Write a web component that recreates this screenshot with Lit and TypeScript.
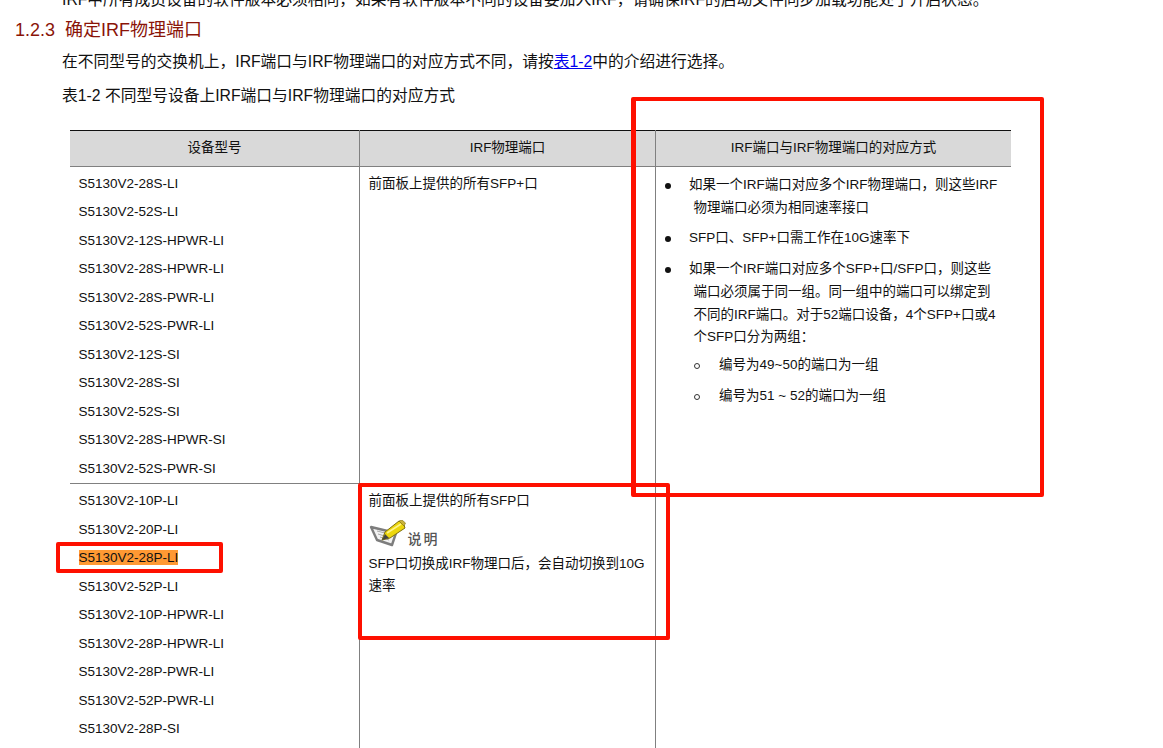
import { LitElement, html, css } from "lit";
import { customElement } from "lit/decorators.js";

const group1 = ["S5130V2-28S-LI","S5130V2-52S-LI","S5130V2-12S-HPWR-LI","S5130V2-28S-HPWR-LI","S5130V2-28S-PWR-LI","S5130V2-52S-PWR-LI","S5130V2-12S-SI","S5130V2-28S-SI","S5130V2-52S-SI","S5130V2-28S-HPWR-SI","S5130V2-52S-PWR-SI"];
const group2 = ["S5130V2-10P-LI","S5130V2-20P-LI","S5130V2-28P-LI","S5130V2-52P-LI","S5130V2-10P-HPWR-LI","S5130V2-28P-HPWR-LI","S5130V2-28P-PWR-LI","S5130V2-52P-PWR-LI","S5130V2-28P-SI"];

@customElement("app-root")
export class AppRoot extends LitElement {
  static styles = css`
    :host {
      display: block;
      position: relative;
      width: 1163px;
      height: 748px;
      overflow: hidden;
      background: #fff;
      color: #111;
      font-family: "Liberation Sans", "Noto Sans CJK SC", sans-serif;
      font-size: 13.5px;
    }
    .cut { margin: -11px 0 0 62px; font-size: 15.75px; line-height: 22px; white-space: nowrap; }
    h2 { margin: 6px 0 0 15px; font-size: 18px; font-weight: 400; line-height: 26px; color: #8a1408; }
    h2 span { margin-right: 10px; }
    .para { margin: 8px 0 0 62px; font-size: 15.75px; line-height: 22px; white-space: nowrap; }
    .para a { color: #0000ee; text-decoration: underline; }
    .caption { margin: 12px 0 0 62px; font-size: 15.75px; line-height: 22px; white-space: nowrap; }
    table {
      margin: 23px 0 0 70px;
      width: 941px;
      table-layout: fixed;
      border-collapse: collapse;
      border-top: 1px solid #111;
    }
    th {
      height: 30px;
      padding: 0 0 5px;
      background: #d9d9d9;
      font-weight: 400;
      text-align: center;
      border-bottom: 1px solid #808080;
    }
    td { padding: 0 0 0 8.5px; vertical-align: top; }
    th + th, td + td { border-left: 1px solid #808080; }
    .c1 { width: 289px; }
    .c2 { width: 295px; }
    .first { border-bottom: 1px solid #808080; }
    .model { margin: 0; height: 28.5px; line-height: 28.5px; white-space: nowrap; }
    .models { padding-top: 2.6px; }
    .second { padding: 3px 0 30px 8.5px; }
    mark { background: #ff9933; color: inherit; padding: 0; }
    .port { margin: 0; height: 28.5px; line-height: 28.5px; white-space: nowrap; }
    .ports { padding-top: 2.6px; }
    .second-port { padding-top: 3px; }
    .note { display: flex; align-items: flex-end; height: 32px; margin: -1px 0 0; gap: 2px; color: #555; font-size: 14px; }
    .note svg { display: block; }
    .note span { line-height: 18px; margin-bottom: -1px; letter-spacing: 2px; font-weight: 500; }
    .notetext { margin: 6px 0 0; line-height: 22px; white-space: nowrap; }
    ul { margin: 0; padding: 0; list-style: none; }
    .map { padding: 7px 0 0; }
    .map > ul > li { position: relative; padding-left: 33px; white-space: nowrap; line-height: 22.7px; margin-bottom: 8px; }
    .map > ul > li::before { content: ""; position: absolute; left: 9px; top: 9px; width: 6px; height: 6px; border-radius: 50%; background: #111; }
    .wrap { display: block; padding-left: 4.5px; }
    .sub { margin-top: 5px; }
    .sub li { position: relative; padding-left: 30px; height: 31px; line-height: 22.7px; }
    .sub li::before { content: ""; position: absolute; left: 5px; top: 9px; width: 4px; height: 4px; border: 1px solid #333; border-radius: 50%; }
    .mark { position: absolute; border: 4px solid #fe1000; border-radius: 2px; box-sizing: border-box; pointer-events: none; }
    .m1 { left: 631px; top: 97px; width: 413px; height: 400px; border-left-width: 5px; }
    .m2 { left: 358px; top: 483px; width: 312px; height: 157px; }
    .m3 { left: 56px; top: 542px; width: 167px; height: 31px; }
  `;

  private icon() {
    return html`<svg width="37" height="27" viewBox="0 0 37 27" aria-hidden="true">
      <path d="M2 7 L27 13 L23 25 L8 20 Z" fill="#f2f2f2" stroke="#7d7d7d" stroke-width="2.4" stroke-linejoin="round"/>
      <path d="M8 11 L16 13 M9 14 L14 15.500 M11 17 L20 20" stroke="#a8a8a8" stroke-width="1"/>
      <path d="M30 1 L35 5 L36 8 L21 18 L13 20 L16 12 Z" fill="#ecd60c" stroke="#7f7010" stroke-width="1"/>
      <path d="M18 13 L32 4" stroke="#fff48a" stroke-width="1.6"/>
      <path d="M30 1 L35 6 L36.500 3 L33 0 Z" fill="#c9b23a" stroke="#7f7010" stroke-width=".6"/>
      <path d="M16 14 L13 20 L20 18 Z" fill="#444"/>
    </svg>`;
  }

  render() {
    return html`
      <p class="cut">IRF中所有成员设备的软件版本必须相同，如果有软件版本不同的设备要加入IRF，请确保IRF的启动文件同步加载功能处于开启状态。</p>
      <h2><span>1.2.3</span>确定IRF物理端口</h2>
      <p class="para">在不同型号的交换机上，IRF端口与IRF物理端口的对应方式不同，请按<a href="#">表1-2</a>中的介绍进行选择。</p>
      <p class="caption">表1-2 不同型号设备上IRF端口与IRF物理端口的对应方式</p>
      <table>
        <thead>
          <tr>
            <th class="c1">设备型号</th>
            <th class="c2">IRF物理端口</th>
            <th>IRF端口与IRF物理端口的对应方式</th>
          </tr>
        </thead>
        <tbody>
          <tr>
            <td class="first models">${group1.map((m) => html`<p class="model">${m}</p>`)}</td>
            <td class="first ports"><p class="port">前面板上提供的所有SFP+口</p></td>
            <td rowspan="2" class="map">
              <ul>
                <li>如果一个IRF端口对应多个IRF物理端口，则这些IRF<span class="wrap">物理端口必须为相同速率接口</span></li>
                <li>SFP口、SFP+口需工作在10G速率下</li>
                <li>如果一个IRF端口对应多个SFP+口/SFP口，则这些
                  <span class="wrap">端口必须属于同一组。同一组中的端口可以绑定到<br>不同的IRF端口。对于52端口设备，4个SFP+口或4<br>个SFP口分为两组：</span>
                  <ul class="sub">
                    <li>编号为49~50的端口为一组</li>
                    <li>编号为51 ~ 52的端口为一组</li>
                  </ul>
                </li>
              </ul>
            </td>
          </tr>
          <tr>
            <td class="second">${group2.map((m) => html`<p class="model">${m === "S5130V2-28P-LI" ? html`<mark>${m}</mark>` : m}</p>`)}</td>
            <td class="second-port">
              <p class="port">前面板上提供的所有SFP口</p>
              <div class="note">${this.icon()}<span>说明</span></div>
              <p class="notetext">SFP口切换成IRF物理口后，会自动切换到10G<br>速率</p>
            </td>
          </tr>
        </tbody>
      </table>
      <div class="mark m1"></div>
      <div class="mark m2"></div>
      <div class="mark m3"></div>
    `;
  }
}
